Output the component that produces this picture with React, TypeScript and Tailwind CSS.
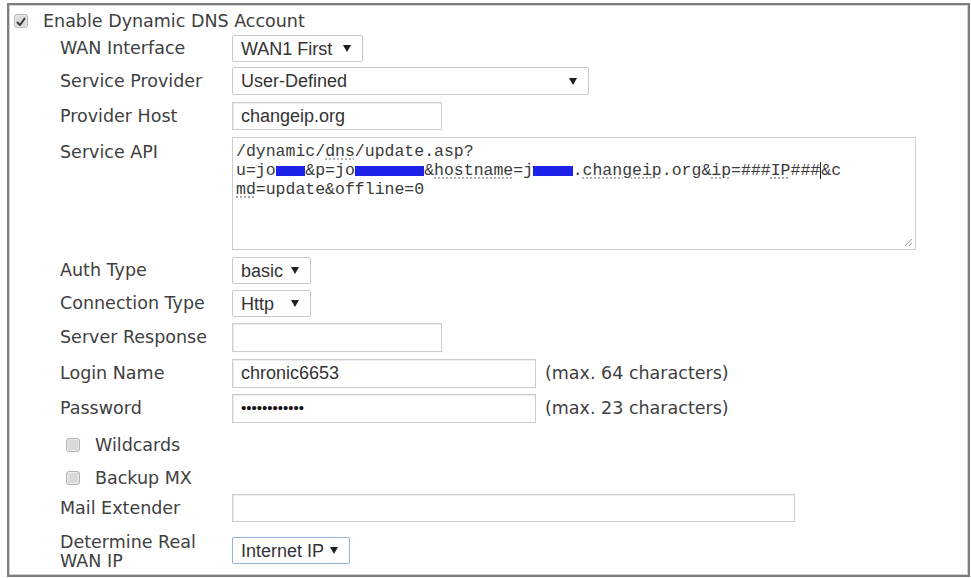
import React from "react";

const labelFont = "font-['DejaVu_Sans',Verdana,sans-serif] text-[17.5px] text-[#404040]";
const ctrlFont = "font-['Liberation_Sans',Arial,sans-serif] text-[18px] text-[#333]";

function Arrow() {
  return (
    <svg width="8" height="7" viewBox="0 0 8 7" className="shrink-0">
      <path d="M0 0h8L4 7z" fill="#1f1f1f" />
    </svg>
  );
}

function Select({
  value,
  className,
}: {
  value: string;
  className: string;
}) {
  return (
    <div
      className={`flex items-center justify-between border border-[#c9c9c9] rounded-[2px] bg-white pl-[8px] pr-[11px] ${ctrlFont} ${className}`}
    >
      <span className="leading-none">{value}</span>
      <Arrow />
    </div>
  );
}

function Input({ value, className }: { value?: string; className: string }) {
  return (
    <div
      className={`flex items-center border border-[#cdcdcd] bg-white pl-[8px] shadow-[inset_1px_1px_0_#ececec] ${ctrlFont} ${className}`}
    >
      {value}
    </div>
  );
}

function Checkbox({ checked = false }: { checked?: boolean }) {
  return (
    <div className="w-[14px] h-[14px] rounded-[3px] border border-[#b3b3b3] bg-[#dadada] shadow-[inset_0_0_0_1px_#ebebeb] flex items-center justify-center">
      {checked && (
        <svg width="10" height="9" viewBox="0 0 10 9">
          <path d="M1 5l3 3 5-7" fill="none" stroke="#3a3a3a" strokeWidth="2" />
        </svg>
      )}
    </div>
  );
}

function Row({
  label,
  className,
  children,
  labelClass = "",
}: {
  label: React.ReactNode;
  className: string;
  children?: React.ReactNode;
  labelClass?: string;
}) {
  return (
    <div className={`flex items-center pl-[51px] ${className}`}>
      <div className={`w-[172px] shrink-0 ${labelFont} ${labelClass}`}>{label}</div>
      {children}
    </div>
  );
}

// hidden part of the URL, covered by a blue box
function Redact({ chars }: { chars: string }) {
  return (
    <span className={`inline-flex items-center ${chars} h-[19px] align-top`}>
      <span className="block w-full h-[10px] bg-[#1c22e8]" />
    </span>
  );
}

const sq = "underline decoration-dotted decoration-[#9a9a9a] underline-offset-[3px]";

export default function App() {
  return (
    <div className="w-[971px] h-[578px] bg-white">
      <div className="ml-[7px] mt-[3px] w-[963px] h-[574px] border-2 border-[#7d7d7d] shadow-[inset_0_0_0_1px_#d2d2d2] flex flex-col">
        {/* account toggle */}
        <div className="flex items-center h-[22px] mt-[5px] pl-[5px]">
          <Checkbox checked />
          <span className={`ml-[15px] ${labelFont}`}>Enable Dynamic DNS Account</span>
        </div>

        <Row label="WAN Interface" className="mt-[3px] h-[27px]">
          <Select value="WAN1 First" className="w-[131px] h-[27px]" />
        </Row>
        <Row label="Service Provider" className="mt-[5px] h-[28px]">
          <Select value="User-Defined" className="w-[357px] h-[28px]" />
        </Row>
        <Row label="Provider Host" className="mt-[7px] h-[28px]">
          <Input value="changeip.org" className="w-[210px] h-[28px]" />
        </Row>

        <Row label="Service API" className="mt-[7px] h-[113px] !items-start" labelClass="pt-[2px]">
          <div className="relative w-[684px] h-[113px] border border-[#cdcdcd] bg-white pl-[3px] pt-[4px] font-['Liberation_Mono','Courier_New',monospace] text-[16.5px] leading-[19px] text-[#3a3a3a]">
            <div>
              /dynamic/<span className={sq}>dns</span>/update.asp?
            </div>
            <div className="whitespace-pre">
              u=jo<Redact chars="w-[3ch]" />&amp;p=jo<Redact chars="w-[7ch]" />&amp;
              <span className={sq}>hostname</span>=j<Redact chars="w-[4ch]" />.
              <span className={sq}>changeip</span>.org&amp;<span className={sq}>ip</span>=###
              <span className={sq}>IP</span>###
              <span className="inline-block w-0 h-[17px] border-l border-[#222] align-top mt-[1px]" />
              &amp;c
            </div>
            <div>
              <span className={sq}>md</span>=update&amp;offline=0
            </div>
            <svg
              width="9"
              height="9"
              viewBox="0 0 9 9"
              className="absolute right-[2px] bottom-[2px]"
            >
              <path d="M8 1L1 8M8 5L5 8" stroke="#9a9a9a" strokeWidth="1" />
            </svg>
          </div>
        </Row>

        <Row label="Auth Type" className="mt-[7px] h-[27px]">
          <Select value="basic" className="w-[79px] h-[27px]" />
        </Row>
        <Row label="Connection Type" className="mt-[6px] h-[27px]">
          <Select value="Http" className="w-[79px] h-[27px]" />
        </Row>
        <Row label="Server Response" className="mt-[6px] h-[29px]">
          <Input className="w-[210px] h-[29px]" />
        </Row>
        <Row label="Login Name" className="mt-[7px] h-[29px]">
          <Input value="chronic6653" className="w-[304px] h-[29px]" />
          <span className={`ml-[9px] ${labelFont}`}>(max. 64 characters)</span>
        </Row>
        <Row label="Password" className="mt-[6px] h-[29px]">
          <div className="flex items-center w-[304px] h-[29px] border border-[#cdcdcd] bg-white pl-[8px] shadow-[inset_1px_1px_0_#ececec] font-['Liberation_Sans',Arial,sans-serif] text-[15px] text-[#111]">
            ••••••••••••
          </div>
          <span className={`ml-[9px] ${labelFont}`}>(max. 23 characters)</span>
        </Row>

        <div className="flex items-center mt-[9px] h-[26px] pl-[57px]">
          <Checkbox />
          <span className={`ml-[15px] ${labelFont}`}>Wildcards</span>
        </div>
        <div className="flex items-center mt-[7px] h-[26px] pl-[57px]">
          <Checkbox />
          <span className={`ml-[15px] ${labelFont}`}>Backup MX</span>
        </div>

        <Row label="Mail Extender" className="mt-[3px] h-[28px]">
          <Input className="w-[563px] h-[28px]" />
        </Row>
        <Row
          label={
            <>
              Determine Real
              <br />
              WAN IP
            </>
          }
          className="mt-[15px] h-[27px]"
          labelClass="leading-[19px] pt-[2px]"
        >
          <Select value="Internet IP" className="w-[118px] h-[27px] !border-[#8fb2d9]" />
        </Row>
      </div>
    </div>
  );
}
